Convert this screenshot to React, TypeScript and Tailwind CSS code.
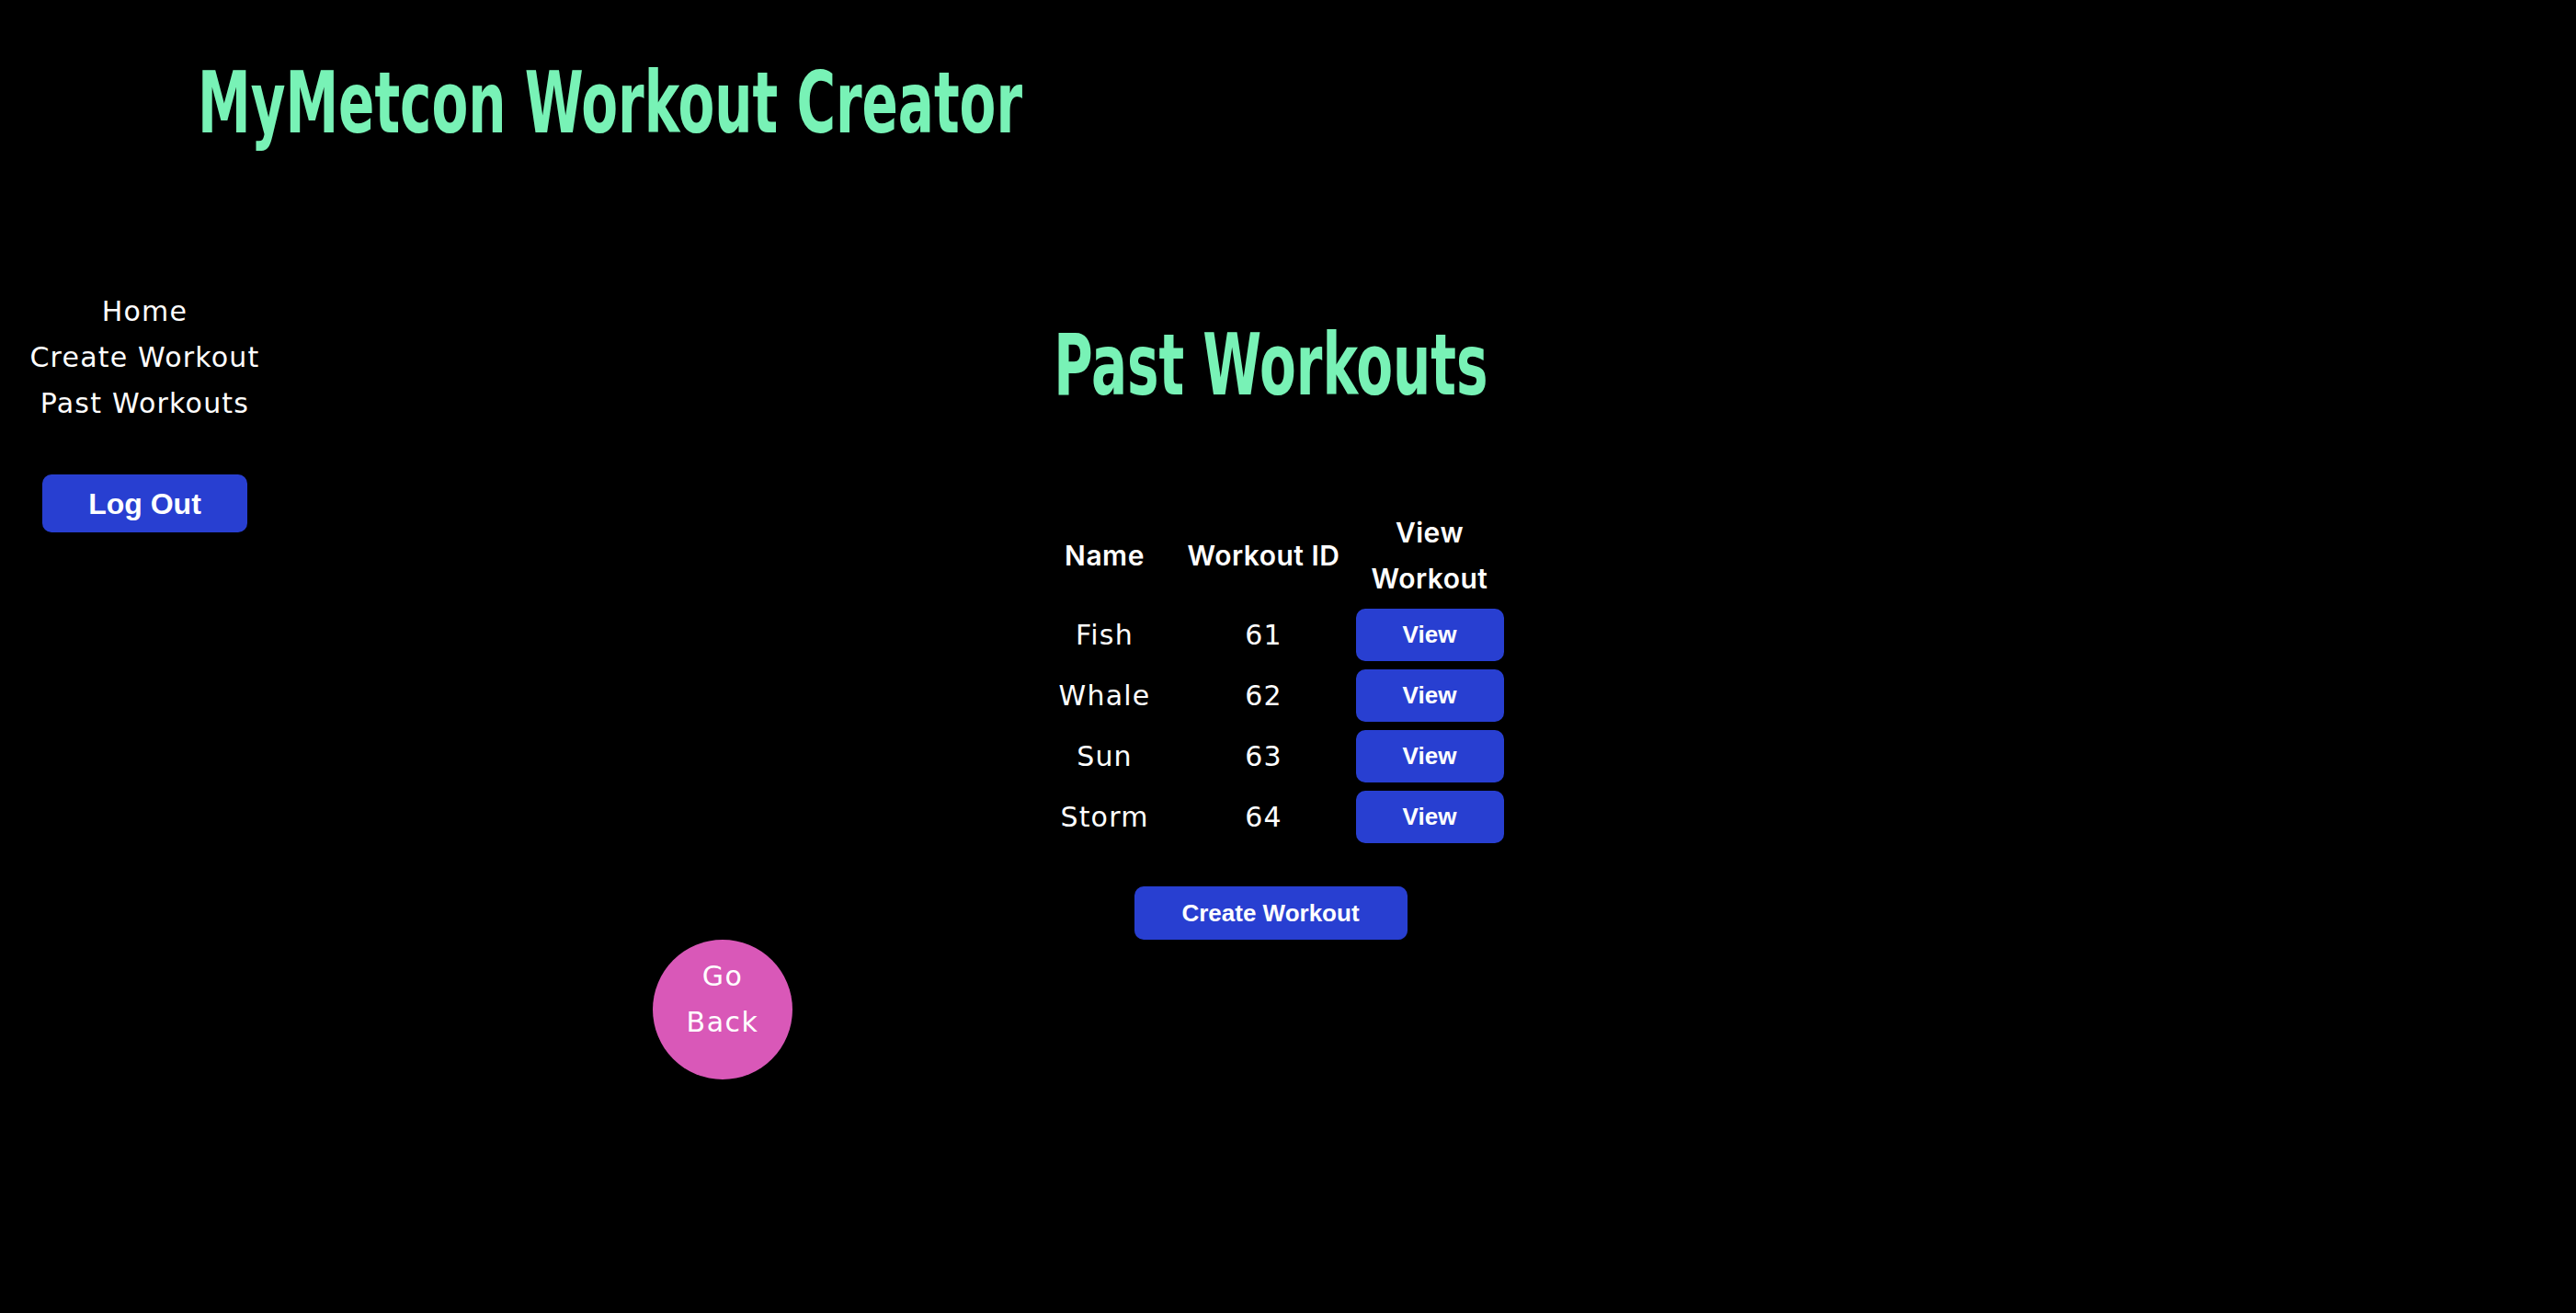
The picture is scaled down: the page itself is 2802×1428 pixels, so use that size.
const workouts = [
  { name: "Fish", id: 61 },
  { name: "Whale", id: 62 },
  { name: "Sun", id: 63 },
  { name: "Storm", id: 64 },
]

const body = { fontFamily: '"DejaVu Sans", "Noto Sans", sans-serif' }
const label = { fontFamily: '"Inter", "Noto Sans", sans-serif' }
const heading = { fontFamily: '"DejaVu Sans Condensed", "DejaVu Sans", sans-serif' }
const btn = { fontFamily: '"Liberation Sans", Arial, sans-serif' }

export default function App() {
  return (
    <div className="min-h-screen w-full bg-black text-white" style={body}>
      <header className="pt-[59px] pl-[215px]">
        <h1
          className="inline-block origin-left scale-x-[0.7] text-[92px] font-bold leading-[107px] text-[#78f2b6]"
          style={heading}
        >
          MyMetcon Workout Creator
        </h1>
      </header>

      <div className="flex flex-row pt-[148px]">
        <nav className="flex w-[315px] flex-col items-center tracking-[1.2px]">
          <a className="text-[30px] leading-[50px]">Home</a>
          <a className="text-[30px] leading-[50px]">Create Workout</a>
          <a className="text-[30px] leading-[50px]">Past Workouts</a>
          <button
            className="mt-[52px] h-[63px] w-[223px] rounded-[10px] bg-[#283fd1] text-[32px] font-bold tracking-normal text-white"
            style={btn}
          >
            Log Out
          </button>
        </nav>

        <main className="flex w-[2134px] flex-col">
          <div className="flex flex-col items-center">
            <h2
              className="mt-[30px] scale-x-[0.7] text-[92px] font-bold leading-[107px] text-[#78f2b6]"
              style={heading}
            >
              Past Workouts
            </h2>

            <div className="mt-[103px] grid grid-cols-[146px_200px_161px] gap-y-[9px] text-center">
              <div className="flex items-center justify-center text-[30px] font-semibold leading-[50px] tracking-[0.5px]" style={label}>Name</div>
              <div className="flex items-center justify-center text-[30px] font-semibold leading-[50px] tracking-[0.5px]" style={label}>Workout ID</div>
              <div className="mb-[-1px] text-[30px] font-semibold leading-[50px] tracking-[0.5px]" style={label}>View Workout</div>
              {workouts.map((w) => (
                <>
                  <div key={w.name} className="flex h-[57px] items-center justify-center text-[30px] tracking-[1.2px]">{w.name}</div>
                  <div className="flex h-[57px] items-center justify-center text-[30px] tracking-[1.2px]">{w.id}</div>
                  <button
                    className="h-[57px] w-[161px] rounded-[10px] bg-[#283fd1] text-[26px] font-bold text-white"
                    style={btn}
                  >
                    View
                  </button>
                </>
              ))}
            </div>

            <button
              className="mt-[47px] h-[58px] w-[297px] rounded-[10px] bg-[#283fd1] text-[26px] font-bold text-white"
              style={btn}
            >
              Create Workout
            </button>
          </div>

          <button className="ml-[395px] flex h-[152px] w-[152px] flex-col items-center rounded-full bg-[#d958b8] pt-[15px] text-[30px] leading-[50px] tracking-[1.5px] text-white">
            <span>Go</span>
            <span>Back</span>
          </button>
        </main>
      </div>
    </div>
  )
}
